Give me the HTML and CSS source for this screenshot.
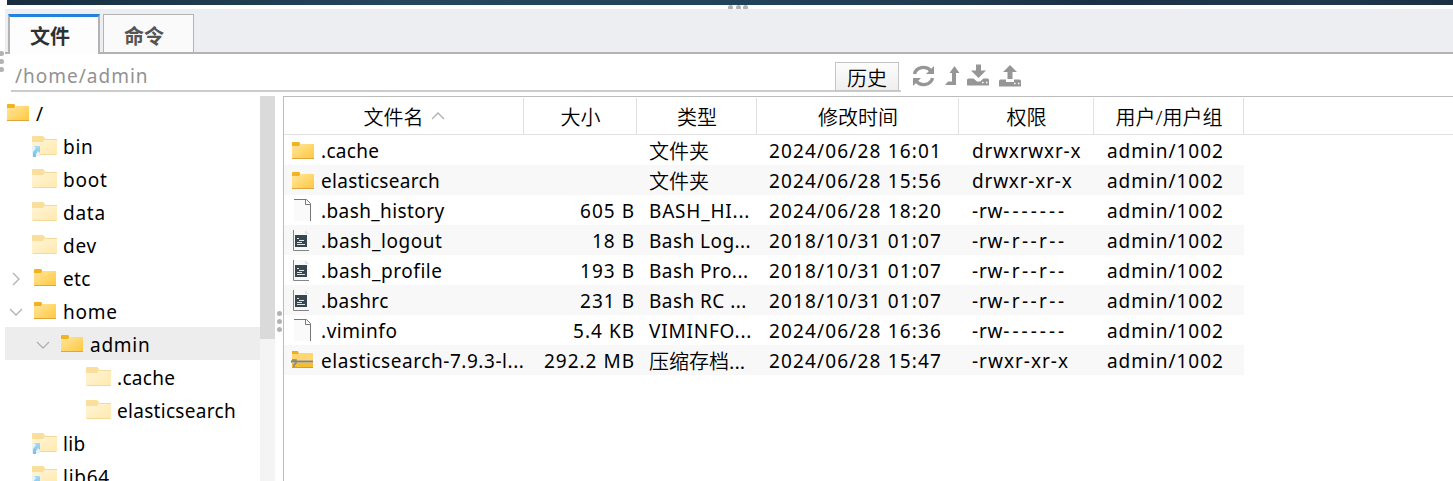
FILE: index.html
```html
<!DOCTYPE html>
<html lang="zh-CN">
<head>
<meta charset="utf-8">
<title>文件</title>
<link rel="stylesheet" href="styles.css">
</head>
<body>
<svg class="defs" aria-hidden="true">
  <defs>
    <linearGradient id="gold" x1="0" y1="0" x2="1" y2="1"><stop offset="0" stop-color="#ffe69f"/><stop offset="1" stop-color="#ffc83d"/></linearGradient>
    <linearGradient id="pale" x1="0" y1="0" x2="1" y2="1"><stop offset="0" stop-color="#fff5d8"/><stop offset="1" stop-color="#ffe9ae"/></linearGradient>
    <linearGradient id="sky" x1="0" y1="0" x2="0" y2="1"><stop offset="0" stop-color="#a5dbf5"/><stop offset="1" stop-color="#79bde5"/></linearGradient>
    <symbol id="folder" viewBox="0 0 22 17"><path d="M0 1q0-1 1-1h6l1 1v3H0z" fill="#f2b31e"/><path d="M0 4h7l1.500-2H22v15H0z" fill="url(#gold)"/><path d="M0 16.500h22" stroke="#dfa640"/></symbol>
    <symbol id="faded" viewBox="0 0 25 19"><path d="M0 1q0-1 1-1h10l2 2v4H0z" fill="#fadf9c"/><path d="M0 6h11l2-3h12v16H0z" fill="url(#pale)"/><path d="M13 3.500h12M1 18.500h23" stroke="#f4d99d"/></symbol>
    <symbol id="linked" viewBox="0 0 25 21"><use href="#faded" width="25" height="19"/><path d="M0 10h8v10H0z" fill="#e6f4fa"/><path d="M2 10h6v7l-2-2-2 3v3H1v-5l3-4z" fill="url(#sky)"/></symbol>
    <symbol id="file" viewBox="0 0 18 22"><path d="M0 0h12l5 5v17H0z" fill="#fafafa"/><path d="M0 .5h12.500l4 4V22M11.500 1v4.500H17" fill="none" stroke="#777"/></symbol>
    <symbol id="script" viewBox="0 0 17 21"><path d="M1 0h11l4 4v16H1z" fill="#f8f8f8"/><path d="M.5 0v20.500H16" fill="none" stroke="#858585"/><path d="M12 0v4h4z" fill="#e3e3e3"/><path d="M2 5h12v12H2z" fill="#35464f"/><path d="M4 8.500h2M6 10.500h5M4 12.500h5M4 14.500h8" stroke="#dce4e7"/></symbol>
    <symbol id="archive" viewBox="0 0 23 18"><path d="M1 0h6l1 3H1z" fill="#efad20"/><path d="M1 3h7l1-1h13v15H1z" fill="#ffd66f"/><path d="M1 12h21v5H1z" fill="#f6bd2d"/><path d="M1 16.500h21" stroke="#d99c29"/><path d="M0 9h22v3H0z" fill="#c3b48c"/><path d="M0 10.500h22" stroke="#85826f"/><path d="M1 9h4v3l-2 2v2" fill="none" stroke="#8b8571" stroke-width="1.500"/></symbol>
    <symbol id="open" viewBox="0 0 14 8"><path d="M1 1l6 6 6-6"/></symbol>
    <symbol id="closed" viewBox="0 0 8 14"><path d="M1 1l6 6-6 6"/></symbol>
  </defs>
</svg>
<main class="window">
  <div class="banner"></div>
  <div class="grip grip-top"><i></i><i></i><i></i></div>
  <div class="grip grip-left"><i></i><i></i><i></i></div>
  <nav class="tabs"><div class="tab active">文件</div><div class="tab">命令</div></nav>
  <div class="toolbar">
    <div class="path"><span>/home/admin</span><button>历史</button></div>
    <svg class="tools" viewBox="0 0 108 22">
      <g fill="none" stroke="#969696" stroke-width="3.400"><path d="M1.500 9C3 2 13 0 18 6"/><path d="M19.500 13C18 20 8 22 3 16"/></g>
      <g fill="#969696"><path d="M21 1v8h-8zM0 21v-8h8z"/>
      <path d="M41.500 1l5 7H43v12H32l3-3.500h4V8h-2.500z"/>
      <path d="M63-.5h5v6h5L65.500 13 58 5.500h5zM54 15q0-1.500 1.500-1.500h5l3.500 3h3l3.500-3h4q1.500 0 1.500 1.500v5.500H54z"/>
      <path d="M97 0l7 7h-4.500v7h-5V7H90zM86 16q0-1.500 1.500-1.500H93V17h8v-2.500h5.500q1.500 0 1.500 1.500v5.500H86z"/></g>
      <path d="M69 17.500h1.500M73 17.500h1.500M101 18.500h1.500M105 18.500h1.500" stroke="#fff" stroke-width="1.500"/>
    </svg>
  </div>
  <div class="panes">
    <aside class="tree">
      <div class="node l0"><svg class="folder"><use href="#folder"/></svg><span>/</span></div>
      <div class="node l1"><svg class="linked"><use href="#linked"/></svg><span>bin</span></div>
      <div class="node l1"><svg class="faded"><use href="#faded"/></svg><span>boot</span></div>
      <div class="node l1"><svg class="faded"><use href="#faded"/></svg><span>data</span></div>
      <div class="node l1"><svg class="faded"><use href="#faded"/></svg><span>dev</span></div>
      <div class="node l1"><svg class="closed"><use href="#closed"/></svg><svg class="folder"><use href="#folder"/></svg><span class="tight">etc</span></div>
      <div class="node l1"><svg class="open"><use href="#open"/></svg><svg class="folder"><use href="#folder"/></svg><span>home</span></div>
      <div class="node l2 selected"><svg class="open"><use href="#open"/></svg><svg class="folder"><use href="#folder"/></svg><span>admin</span></div>
      <div class="node l3"><svg class="faded"><use href="#faded"/></svg><span class="tight">.cache</span></div>
      <div class="node l3"><svg class="faded"><use href="#faded"/></svg><span class="tight">elasticsearch</span></div>
      <div class="node l1"><svg class="linked"><use href="#linked"/></svg><span class="tight">lib</span></div>
      <div class="node l1"><svg class="linked"><use href="#linked"/></svg><span>lib64</span></div>
    </aside>
    <div class="scrollbar"><div class="thumb"></div></div>
    <div class="grip splitter"><i></i><i></i><i></i></div>
    <section class="files">
      <div class="row head"><span>文件名<svg class="open sort"><use href="#open"/></svg></span><span>大小</span><span>类型</span><span>修改时间</span><span>权限</span><span>用户/用户组</span></div>
      <div class="row"><span class="name"><svg class="folder"><use href="#folder"/></svg>.cache</span><span class="size"></span><span class="kind">文件夹</span><span class="date">2024/06/28 16:01</span><span class="mode">drwxrwxr-x</span><span class="owner">admin/1002</span></div>
      <div class="row"><span class="name"><svg class="folder"><use href="#folder"/></svg>elasticsearch</span><span class="size"></span><span class="kind">文件夹</span><span class="date">2024/06/28 15:56</span><span class="mode">drwxr-xr-x</span><span class="owner">admin/1002</span></div>
      <div class="row"><span class="name wide"><svg class="file"><use href="#file"/></svg>.bash_history</span><span class="size">605 B</span><span class="upper">BASH_HI...</span><span class="date">2024/06/28 18:20</span><span class="mode">-rw<b class="private">-------</b></span><span class="owner">admin/1002</span></div>
      <div class="row"><span class="name wider"><svg class="script"><use href="#script"/></svg>.bash_logout</span><span class="size">18 B</span><span>Bash Log...</span><span class="date">2018/10/31 01:07</span><span class="mode">-rw<b class="shared">-r--r--</b></span><span class="owner">admin/1002</span></div>
      <div class="row"><span class="name wider"><svg class="script"><use href="#script"/></svg>.bash_profile</span><span class="size">193 B</span><span>Bash Pro...</span><span class="date">2018/10/31 01:07</span><span class="mode">-rw<b class="shared">-r--r--</b></span><span class="owner">admin/1002</span></div>
      <div class="row"><span class="name wide"><svg class="script"><use href="#script"/></svg>.bashrc</span><span class="size">231 B</span><span>Bash RC ...</span><span class="date">2018/10/31 01:07</span><span class="mode">-rw<b class="shared">-r--r--</b></span><span class="owner">admin/1002</span></div>
      <div class="row"><span class="name wider"><svg class="file"><use href="#file"/></svg>.viminfo</span><span class="size">5.4 KB</span><span class="upper">VIMINFO...</span><span class="date">2024/06/28 16:36</span><span class="mode">-rw<b class="private">-------</b></span><span class="owner">admin/1002</span></div>
      <div class="row"><span class="name wider"><svg class="archive"><use href="#archive"/></svg>elasticsearch-7.9.3-l...</span><span class="size">292.2 MB</span><span class="kind">压缩存档...</span><span class="date">2024/06/28 15:47</span><span class="mode loose">-rwxr-xr-x</span><span class="owner">admin/1002</span></div>
    </section>
  </div>
</main>
</body>
</html>
```
FILE: styles.css
```css
* { box-sizing: border-box; }
body { margin: 0; background: #fff; color: #000; font: 19px/30px "Noto Sans", "Noto Sans CJK SC", sans-serif; }
.defs { position: absolute; width: 0; height: 0; }
.window { position: relative; width: 1453px; height: 481px; overflow: hidden; display: flex; flex-direction: column; }
.banner { height: 5px; flex: none; margin: 0 0 4px 7px; background: linear-gradient(90deg, #182d40, #1c374b 10%, #25475c 28%, #21435a 50%, #203b50 65%, #1a3045 75%, #20394e 90%, #1b3043); }
.grip { display: flex; gap: 3px; }
.grip i { width: 5px; height: 5px; border-radius: 50%; background: #b2b2b2; }
.grip-top { position: absolute; left: 728px; top: 5px; height: 4px; overflow: hidden; }
.grip-top i { width: 5px; margin-right: -.5px; }
.grip-left { position: absolute; left: -1px; top: 51px; flex-direction: column; }
.tabs { height: 45px; flex: none; margin-left: 5px; padding: 5px 0 0 3px; display: flex; gap: 3px; background: #edeef2; border-bottom: 2px solid #b3b3b3; }
.tab { width: 91px; height: 39px; background: #fafafa; border: 1px solid #b3b3b3; color: #555; font: bold 20px/42px "Noto Sans CJK SC", sans-serif; padding-left: 20px; }
.tab.active { width: 92px; height: 40px; color: #303030; background: #fdfdfd; border: solid #b3b3b3; border-width: 3px 2px 0; border-top-color: #2482df; line-height: 38px; }
.toolbar { height: 38px; flex: none; display: flex; }
.path { width: 890px; height: 38px; margin-left: 11px; padding: 8px 2px 0 4px; display: flex; justify-content: space-between; border-bottom: 2px solid #cbcbcb; color: #929292; letter-spacing: 1px; line-height: 28px; }
.path button { width: 64px; height: 29px; padding: 0; color: #000; border: 1px solid #c5c5c5; background: linear-gradient(#fcfcfc, #efefef); font: 350 20px/29px "Noto Sans CJK SC", sans-serif; }
.tools { width: 108px; height: 22px; margin: 11px 0 0 12px; overflow: visible; }
.panes { height: 389px; display: flex; padding-top: 4px; }
.tree { width: 255px; margin-left: 5px; overflow: hidden; }
.node { height: 33px; display: flex; align-items: flex-start; justify-content: flex-start; line-height: 37px; letter-spacing: .75px; }
.node svg { flex: none; }
.l0 { padding-left: 2px; } .l1 { padding-left: 27px; } .l2 { padding-left: 54px; } .l3 { padding-left: 81px; }
.folder { width: 22px; height: 17px; }
.faded { width: 25px; height: 19px; }
.linked { width: 25px; height: 21px; }
.node .folder { margin: 8px 7px 0 0; }
.node .folder:not(:first-child), .l1 > .folder { margin-left: 2px; }
.node .faded, .node .linked { margin: 7px 6px 0 0; }
.l0 .folder { margin-left: 0; }
.open { width: 14px; height: 8px; fill: none; stroke: #b0b0b0; stroke-width: 1.300; }
.closed { width: 8px; height: 14px; fill: none; stroke: #b0b0b0; stroke-width: 1.300; }
.node .open { margin: 14px 9px 0 -23px; }
.node .closed { margin: 11px 12px 0 -20px; }
.selected { background: #ededed; }
.tight { letter-spacing: .3px; }
.scrollbar { width: 15px; background: #f4f4f4; }
.thumb { height: 243px; background: #dadada; }
.splitter { width: 8px; padding: 215px 0 0 2px; flex-direction: column; }
.files { flex: 1; padding-top: 1px; border: solid #bcbcbc; border-width: 1px 0 0 1px; }
.row { display: grid; grid-template-columns: 240px 113px 120px 202px 135px 150px; width: 960px; height: 30px; white-space: pre; }
.row > span { height: 30px; padding-left: 12px; line-height: 32px; letter-spacing: .45px; }
.row:nth-child(odd) { background: #f8f8f8; }
.row.head { height: 37px; width: 1169px; background: linear-gradient(#e2e2e2, #e2e2e2) 0 100% / 100% 1px no-repeat #fff; }
.head > span { height: 37px; padding: 3px 0 0 1px; border-right: 1px solid #e2e2e2; text-align: center; line-height: 33px; font-weight: 350; font-size: 20px; letter-spacing: 0; }
.sort { margin-left: 7px; transform: rotate(180deg); vertical-align: 5px; }
.row .name { display: flex; padding-left: 37px; letter-spacing: .3px; }
.row .name.wide { letter-spacing: .4px; }
.row .name.wider { letter-spacing: .55px; }
.name svg { flex: none; margin-left: -29px; margin-right: 7px; margin-top: 7px; }
.name .file { width: 18px; height: 22px; margin: 4px 9px 0 -27px; }
.name .script { width: 17px; height: 21px; margin: 5px 11px 0 -28px; }
.name .archive { width: 23px; height: 18px; margin: 6px 7px 0 -30px; }
.row .size { padding: 0 2px 0 0; text-align: right; letter-spacing: 1px; }
.row .kind { font-family: "Noto Sans CJK SC", sans-serif; font-weight: 350; font-size: 20px; letter-spacing: 0; }
.row .upper { letter-spacing: .8px; }
.row .date { letter-spacing: 1.15px; }
.row .mode { padding-left: 13px; letter-spacing: .8px; }
.row .mode.loose { letter-spacing: 1px; }
.mode b { font-weight: 400; }
.private { letter-spacing: 3px; }
.shared { letter-spacing: 2.4px; }
.row .owner { padding-left: 13px; letter-spacing: .95px; }
```
